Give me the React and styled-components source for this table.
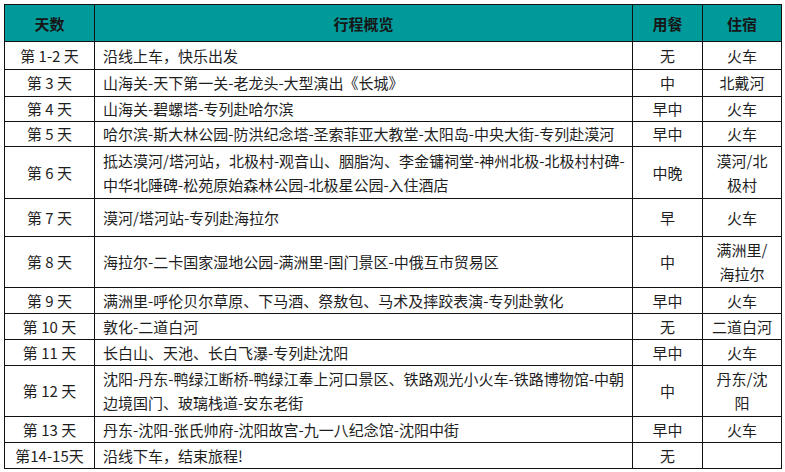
import React from 'react';
import styled, { createGlobalStyle } from 'styled-components';

const GlobalStyle = createGlobalStyle`
  html, body {
    margin: 0;
    padding: 0;
    background: #fff;
  }
  body {
    padding: 4px 0 0 4px;
    font-family: "Noto Sans CJK SC", "Noto Sans", sans-serif;
  }
`;

const Table = styled.table`
  width: 777px;
  border-collapse: collapse;
  table-layout: fixed;
  font-size: 15px;
  color: #1e1e1e;
`;

const HeadCell = styled.th`
  height: 36px;
  padding: 0;
  background: #009a9a;
  border: 1px solid #111;
  font-weight: bold;
  font-size: 15px;
  color: #161616;
  text-align: center;
`;

const Cell = styled.td`
  padding: 0 ${(p) => (p.$left ? '8px' : '2px')};
  border: 1px solid #111;
  text-align: ${(p) => (p.$left ? 'left' : 'center')};
  vertical-align: middle;
  line-height: 24px;
  white-space: nowrap;
`;

const Line = styled.div`
  line-height: 24px;
`;

const days = [
  { day: '第 1-2 天', plan: ['沿线上车，快乐出发'], meal: '无', stay: ['火车'], h: 28 },
  { day: '第 3 天', plan: ['山海关-天下第一关-老龙头-大型演出《长城》'], meal: '中', stay: ['北戴河'], h: 27 },
  { day: '第 4 天', plan: ['山海关-碧螺塔-专列赴哈尔滨'], meal: '早中', stay: ['火车'], h: 25 },
  { day: '第 5 天', plan: ['哈尔滨-斯大林公园-防洪纪念塔-圣索菲亚大教堂-太阳岛-中央大街-专列赴漠河'], meal: '早中', stay: ['火车'], h: 25 },
  {
    day: '第 6 天',
    plan: ['抵达漠河/塔河站，北极村-观音山、胭脂沟、李金镛祠堂-神州北极-北极村村碑-', '中华北陲碑-松苑原始森林公园-北极星公园-入住酒店'],
    meal: '中晚',
    stay: ['漠河/北', '极村'],
    h: 52,
  },
  { day: '第 7 天', plan: ['漠河/塔河站-专列赴海拉尔'], meal: '早', stay: ['火车'], h: 38 },
  { day: '第 8 天', plan: ['海拉尔-二卡国家湿地公园-满洲里-国门景区-中俄互市贸易区'], meal: '中', stay: ['满洲里/', '海拉尔'], h: 51 },
  { day: '第 9 天', plan: ['满洲里-呼伦贝尔草原、下马酒、祭敖包、马术及摔跤表演-专列赴敦化'], meal: '早中', stay: ['火车'], h: 26 },
  { day: '第 10 天', plan: ['敦化-二道白河'], meal: '无', stay: ['二道白河'], h: 26 },
  { day: '第 11 天', plan: ['长白山、天池、长白飞瀑-专列赴沈阳'], meal: '早中', stay: ['火车'], h: 26 },
  {
    day: '第 12 天',
    plan: ['沈阳-丹东-鸭绿江断桥-鸭绿江奉上河口景区、铁路观光小火车-铁路博物馆-中朝', '边境国门、玻璃栈道-安东老街'],
    meal: '中',
    stay: ['丹东/沈', '阳'],
    h: 51,
  },
  { day: '第 13 天', plan: ['丹东-沈阳-张氏帅府-沈阳故宫-九一八纪念馆-沈阳中街'], meal: '早中', stay: ['火车'], h: 26 },
  { day: '第14-15天', plan: ['沿线下车，结束旅程!'], meal: '无', stay: [''], h: 26 },
];

export default function App() {
  return (
    <>
      <GlobalStyle />
      <Table>
        <colgroup>
          <col style={{ width: 90 }} />
          <col style={{ width: 538 }} />
          <col style={{ width: 70 }} />
          <col style={{ width: 79 }} />
        </colgroup>
        <thead>
          <tr>
            <HeadCell>天数</HeadCell>
            <HeadCell>行程概览</HeadCell>
            <HeadCell>用餐</HeadCell>
            <HeadCell>住宿</HeadCell>
          </tr>
        </thead>
        <tbody>
          {days.map((d) => (
            <tr key={d.day} style={{ height: d.h }}>
              <Cell>{d.day}</Cell>
              <Cell $left>
                {d.plan.map((l) => (
                  <Line key={l}>{l}</Line>
                ))}
              </Cell>
              <Cell>{d.meal}</Cell>
              <Cell>
                {d.stay.map((l, i) => (
                  <Line key={i}>{l}</Line>
                ))}
              </Cell>
            </tr>
          ))}
        </tbody>
      </Table>
    </>
  );
}
